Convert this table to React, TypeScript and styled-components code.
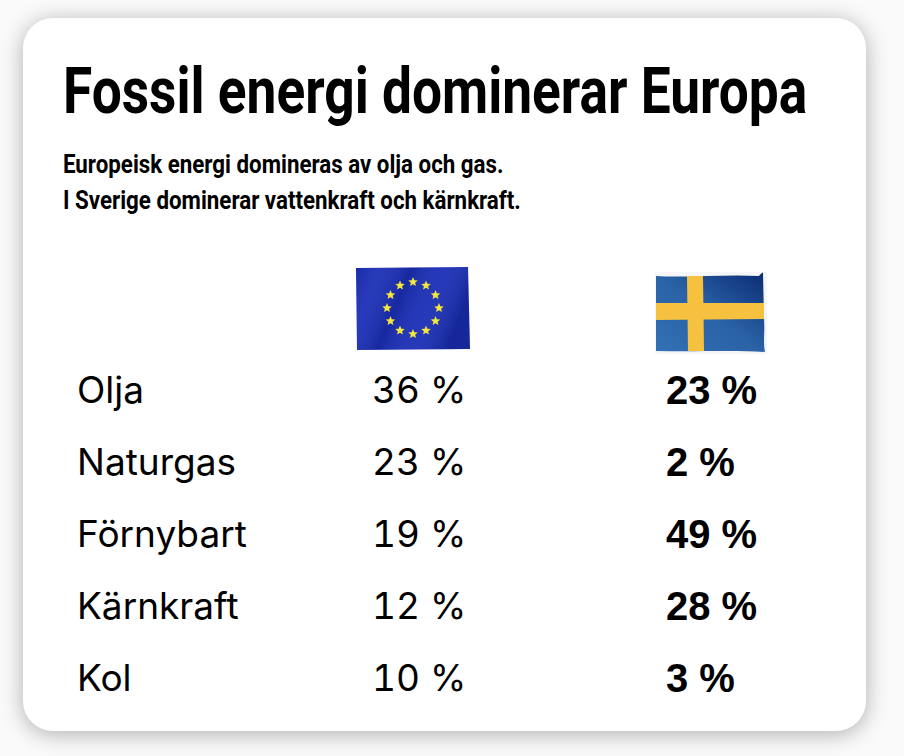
import React from 'react'
import styled, { createGlobalStyle } from 'styled-components'

const GlobalStyle = createGlobalStyle`
  html, body {
    margin: 0;
    padding: 0;
    background: #fafafa;
  }
`

const Page = styled.div`
  width: 904px;
  height: 756px;
  padding: 18px 0 0 23px;
  box-sizing: border-box;
`

const Card = styled.div`
  width: 843px;
  height: 713px;
  box-sizing: border-box;
  padding: 42px 0 0 40px;
  background: #fff;
  border-radius: 30px;
  box-shadow: 0 3px 22px rgba(0, 0, 0, 0.3);
  overflow: hidden;
`

const Title = styled.h1`
  margin: 0;
  height: 63px;
  font-family: Roboto, 'Liberation Sans', sans-serif;
  font-weight: 700;
  font-size: 64px;
  line-height: 63px;
  color: #000;
  white-space: nowrap;
  transform: scaleX(0.832);
  transform-origin: left center;
`

const SubTitle = styled.p`
  margin: 23px 0 0;
  font-family: Roboto, 'Liberation Sans', sans-serif;
  font-weight: 700;
  font-size: 25.5px;
  line-height: 36px;
  color: #000;
  white-space: nowrap;
  transform: scaleX(0.875);
  transform-origin: left center;
`

const FlagRow = styled.div`
  display: grid;
  grid-template-columns: 279px 299px auto;
  height: 87px;
  margin-top: 49px;
  margin-left: 14px;
  align-items: start;
`

const FlagCell = styled.div<{ $offset?: number }>`
  grid-column: ${(p) => (p.$offset ? 3 : 2)};
  margin-top: ${(p) => p.$offset || 0}px;
  line-height: 0;
`

const Table = styled.div`
  display: grid;
  grid-template-columns: 295px 294px auto;
  margin-left: 14px;
`

const Label = styled.div`
  font-family: Inter, 'Noto Sans', sans-serif;
  font-size: 37px;
  line-height: 72px;
  color: #000;
`

const EuValue = styled(Label)`
  font-variant-numeric: tabular-nums;
`

const SeValue = styled.div`
  font-family: 'Liberation Sans', Arial, sans-serif;
  font-weight: 700;
  font-size: 40px;
  line-height: 72px;
  color: #000;
`

const rows: [string, string, string][] = [
  ['Olja', '36 %', '23 %'],
  ['Naturgas', '23 %', '2 %'],
  ['Förnybart', '19 %', '49 %'],
  ['Kärnkraft', '12 %', '28 %'],
  ['Kol', '10 %', '3 %'],
]

const starPoints = (cx: number, cy: number, r: number) => {
  const pts: string[] = []
  for (let i = 0; i < 10; i++) {
    const rad = i % 2 === 0 ? r : r * 0.45
    const a = -Math.PI / 2 + (i * Math.PI) / 5
    pts.push(`${(cx + rad * Math.cos(a)).toFixed(2)},${(cy + rad * Math.sin(a)).toFixed(2)}`)
  }
  return pts.join(' ')
}

const EuFlag = () => (
  <svg width="114" height="83" viewBox="0 0 114 83">
    <defs>
      <linearGradient id="euWrinkle" x1="0" y1="0" x2="1" y2="0.3">
        <stop offset="0" stopColor="#000" stopOpacity="0.1" />
        <stop offset="0.2" stopColor="#fff" stopOpacity="0.06" />
        <stop offset="0.45" stopColor="#000" stopOpacity="0.12" />
        <stop offset="0.7" stopColor="#fff" stopOpacity="0.05" />
        <stop offset="1" stopColor="#000" stopOpacity="0.15" />
      </linearGradient>
    </defs>
    <path d="M0 1 L112 0 L114 82 L1 83 Z" fill="#1a2eb6" />
    <path d="M0 1 L112 0 L114 82 L1 83 Z" fill="url(#euWrinkle)" />
    {Array.from({ length: 12 }).map((_, i) => {
      const a = (i * Math.PI) / 6 - Math.PI / 2
      return (
        <polygon
          key={i}
          points={starPoints(57 + 26 * Math.cos(a), 41 + 26 * Math.sin(a), 5)}
          fill="#f3e63c"
        />
      )
    })}
  </svg>
)

const SeFlag = () => (
  <svg width="112" height="82" viewBox="0 0 112 82">
    <defs>
      <linearGradient id="seShade" x1="0" y1="1" x2="1" y2="0">
        <stop offset="0" stopColor="#3370b4" />
        <stop offset="0.5" stopColor="#2a62a6" />
        <stop offset="1" stopColor="#0b2b74" />
      </linearGradient>
    </defs>
    <rect x="0" y="0" width="112" height="82" fill="#f6f6f8" />
    <path
      d="M1 4 C30 6 70 2 104 4 C106 2 107 0 108 1 L109 46 C110 62 108 70 110 80 C80 78 40 80 1 79 Z"
      fill="url(#seShade)"
    />
    <path d="M32 4 L48 4 L49 79 L33 79 Z" fill="#f6c13e" />
    <path d="M1 31 L109 31 C109 37 109 42 109 47 L1 48 Z" fill="#f6c13e" />
  </svg>
)

export default function App() {
  return (
    <>
      <GlobalStyle />
      <Page>
        <Card>
          <Title>Fossil energi dominerar Europa</Title>
          <SubTitle>
            Europeisk energi domineras av olja och gas.
            <br />I Sverige dominerar vattenkraft och kärnkraft.
          </SubTitle>
          <FlagRow>
            <FlagCell>
              <EuFlag />
            </FlagCell>
            <FlagCell $offset={5}>
              <SeFlag />
            </FlagCell>
          </FlagRow>
          <Table>
            {rows.map(([label, eu, se]) => (
              <React.Fragment key={label}>
                <Label>{label}</Label>
                <EuValue>{eu}</EuValue>
                <SeValue>{se}</SeValue>
              </React.Fragment>
            ))}
          </Table>
        </Card>
      </Page>
    </>
  )
}
